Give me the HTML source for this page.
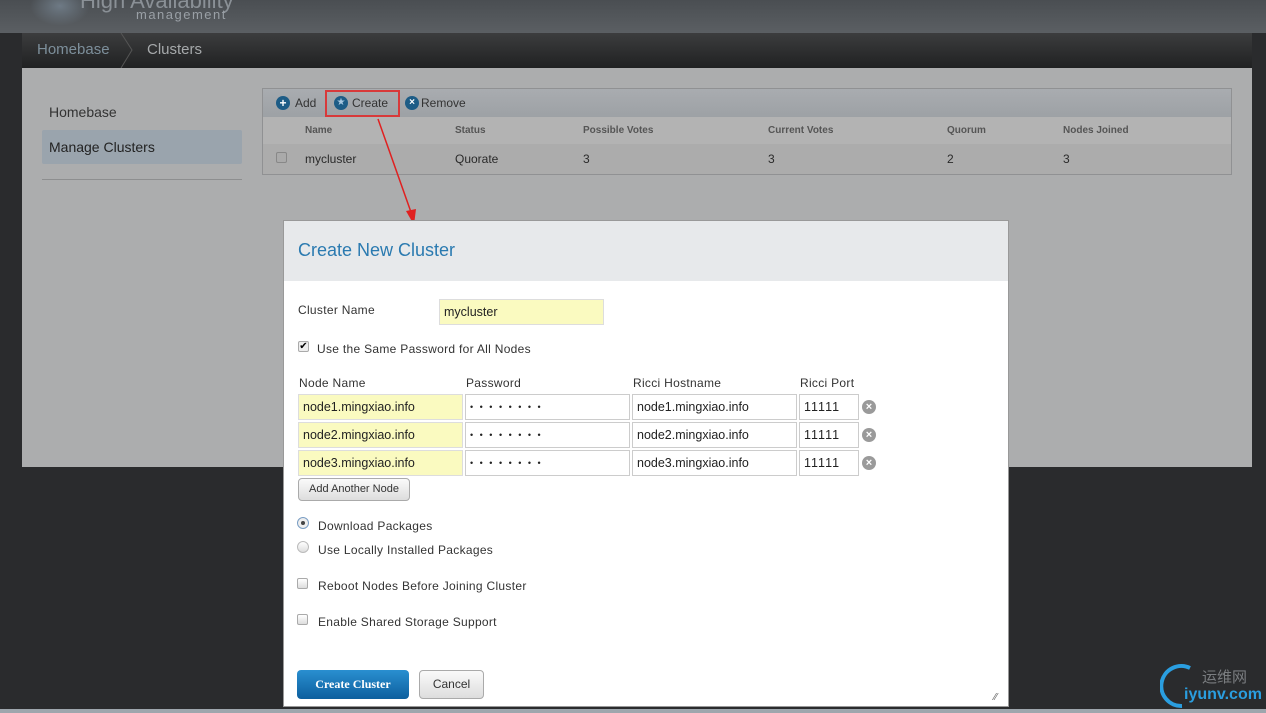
<!DOCTYPE html>
<html><head><meta charset="utf-8"><style>
*{margin:0;padding:0;box-sizing:border-box}
body{width:1266px;height:713px;overflow:hidden;background:#2a2b2d;font-family:"Liberation Sans","DejaVu Sans",sans-serif;position:relative}
.abs{position:absolute}
.top{left:0;top:0;width:1266px;height:33px;background:linear-gradient(#4a4e52,#5b5f63)}
.crumb{left:22px;top:33px;width:1230px;height:35px;background:linear-gradient(#3c3d3e,#202122)}
.panel{left:22px;top:68px;width:1230px;height:399px;background:#acadae}
.t{font-size:13px;color:#2a2a2a}
input.f{position:absolute;height:26px;border:1px solid #ccc;font:12.5px "Liberation Sans",sans-serif;padding-left:4px;color:#222;background:#fff}
.y{background:#fafac0 !important;border-color:#ddd !important}
.x{position:absolute;width:14px;height:14px;border-radius:50%;background:#9a9a9a;color:#fff;font-size:11px;line-height:14px;text-align:center;font-weight:bold}
.cb{position:absolute;width:11px;height:11px;border:1px solid #aaa;border-radius:2px;background:linear-gradient(#fff,#ddd)}
.lbl{position:absolute;font-size:12px;color:#333;letter-spacing:.3px}
.pw{font-size:9px !important;letter-spacing:2px}
</style></head><body>
<div class="abs top"></div>
<div class="abs" style="left:30px;top:-14px;width:60px;height:40px;border-radius:50%;background:radial-gradient(#6e7a85,transparent 70%)"></div>
<div class="abs" style="left:80px;top:-12px;font-size:22px;color:#8a9096">High Availability</div>
<div class="abs" style="left:136px;top:7px;font-size:13px;color:#9aa0a6;letter-spacing:1.5px">management</div>
<div class="abs crumb"></div>
<div class="abs" style="left:37px;top:41px;font-size:15px;color:#7d8f9b">Homebase</div>
<svg class="abs" style="left:120px;top:33px" width="14" height="35"><path d="M1 0 L12 17 L1 35" stroke="#555" fill="none"/></svg>
<div class="abs" style="left:147px;top:41px;font-size:15px;color:#a6a9ab">Clusters</div>
<div class="abs panel"></div>
<div class="abs" style="left:49px;top:104px;font-size:14px;color:#333">Homebase</div>
<div class="abs" style="left:42px;top:130px;width:200px;height:34px;background:#9aa4ad;border-radius:2px"></div>
<div class="abs" style="left:49px;top:139px;font-size:14px;color:#222">Manage Clusters</div>
<div class="abs" style="left:42px;top:179px;width:200px;height:1px;background:#8d8e8f"></div>
<div class="abs" style="left:262px;top:88px;width:970px;height:87px;border:1px solid #909193;background:#acacac"></div>
<div class="abs" style="left:263px;top:89px;width:968px;height:28px;background:linear-gradient(#a9acb0,#9da1a5)"></div>
<div class="abs" style="left:263px;top:117px;width:968px;height:27px;background:#b3b3b3"></div>
<div class="abs" style="left:276px;top:96px;width:14px;height:14px;border-radius:50%;background:#1d5c86;color:#fff;font-size:12px;line-height:14px;text-align:center;font-weight:bold">+</div>
<div class="abs" style="left:295px;top:96px;font-size:12px;color:#333">Add</div>
<div class="abs" style="left:325px;top:90px;width:75px;height:27px;border:2px solid #d8393a"></div>
<div class="abs" style="left:334px;top:96px;width:14px;height:14px;border-radius:50%;background:#1d5c86;color:#a8c8e0;font-size:10px;line-height:14px;text-align:center">★</div>
<div class="abs" style="left:352px;top:96px;font-size:12px;color:#333">Create</div>
<div class="abs" style="left:405px;top:96px;width:14px;height:14px;border-radius:50%;background:#1d5c86;color:#fff;font-size:10px;line-height:14px;text-align:center;font-weight:bold">×</div>
<div class="abs" style="left:421px;top:96px;font-size:12px;color:#333">Remove</div>
<div class="abs" style="top:125px;left:305px;font-size:10px;font-weight:bold;color:#555">Name</div>
<div class="abs" style="top:125px;left:455px;font-size:10px;font-weight:bold;color:#555">Status</div>
<div class="abs" style="top:125px;left:583px;font-size:10px;font-weight:bold;color:#555">Possible Votes</div>
<div class="abs" style="top:125px;left:768px;font-size:10px;font-weight:bold;color:#555">Current Votes</div>
<div class="abs" style="top:125px;left:947px;font-size:10px;font-weight:bold;color:#555">Quorum</div>
<div class="abs" style="top:125px;left:1063px;font-size:10px;font-weight:bold;color:#555">Nodes Joined</div>
<div class="cb" style="left:276px;top:152px;background:#aaa;border-color:#888"></div>
<div class="abs t" style="top:152px;left:305px;font-size:12px">mycluster</div>
<div class="abs t" style="top:152px;left:455px;font-size:12px">Quorate</div>
<div class="abs t" style="top:152px;left:583px;font-size:12px">3</div>
<div class="abs t" style="top:152px;left:768px;font-size:12px">3</div>
<div class="abs t" style="top:152px;left:947px;font-size:12px">2</div>
<div class="abs t" style="top:152px;left:1063px;font-size:12px">3</div>
<svg class="abs" style="left:370px;top:115px" width="60" height="115"><path d="M8 4 L42 100" stroke="#e02020" stroke-width="1.5"/><path d="M36 96 L44 110 L46 94 Z" fill="#e02020"/></svg>
<!-- modal -->
<div class="abs" style="left:283px;top:220px;width:726px;height:487px;background:#fff;border:1px solid #999"></div>
<div class="abs" style="left:284px;top:221px;width:724px;height:60px;background:#e7e9eb"></div>
<div class="abs" style="left:298px;top:240px;font-size:18px;color:#2a7ab0">Create New Cluster</div>
<div class="lbl" style="left:298px;top:303px">Cluster Name</div>
<input class="f y" style="left:439px;top:299px;width:165px;height:26px" value="mycluster">
<div class="cb" style="left:298px;top:341px;background:#eee;font-size:10px;line-height:9px;text-align:center">✔</div>
<div class="lbl" style="left:317px;top:342px">Use the Same Password for All Nodes</div>
<div class="lbl" style="left:299px;top:376px">Node Name</div>
<div class="lbl" style="left:466px;top:376px">Password</div>
<div class="lbl" style="left:633px;top:376px">Ricci Hostname</div>
<div class="lbl" style="left:800px;top:376px">Ricci Port</div>
<input class="f y" style="left:298px;top:394px;width:165px" value="node1.mingxiao.info">
<input class="f pw" style="left:465px;top:394px;width:165px" value="• • • • • • • •">
<input class="f" style="left:632px;top:394px;width:165px" value="node1.mingxiao.info">
<input class="f" style="left:799px;top:394px;width:60px;letter-spacing:1px" value="11111">
<div class="x" style="left:862px;top:400px">×</div>
<input class="f y" style="left:298px;top:422px;width:165px" value="node2.mingxiao.info">
<input class="f pw" style="left:465px;top:422px;width:165px" value="• • • • • • • •">
<input class="f" style="left:632px;top:422px;width:165px" value="node2.mingxiao.info">
<input class="f" style="left:799px;top:422px;width:60px;letter-spacing:1px" value="11111">
<div class="x" style="left:862px;top:428px">×</div>
<input class="f y" style="left:298px;top:450px;width:165px" value="node3.mingxiao.info">
<input class="f pw" style="left:465px;top:450px;width:165px" value="• • • • • • • •">
<input class="f" style="left:632px;top:450px;width:165px" value="node3.mingxiao.info">
<input class="f" style="left:799px;top:450px;width:60px;letter-spacing:1px" value="11111">
<div class="x" style="left:862px;top:456px">×</div>
<div class="abs" style="left:298px;top:478px;width:112px;height:23px;border:1px solid #aaa;border-radius:4px;background:linear-gradient(#fafafa,#ddd);font-size:11px;color:#333;text-align:center;line-height:21px">Add Another Node</div>
<div class="abs" style="left:297px;top:517px;width:12px;height:12px;border-radius:50%;border:1px solid #7a9ec4;background:#eee"><div style="width:4px;height:4px;border-radius:50%;background:#444;margin:3px"></div></div>
<div class="lbl" style="left:318px;top:519px">Download Packages</div>
<div class="abs" style="left:297px;top:541px;width:12px;height:12px;border-radius:50%;border:1px solid #bbb;background:linear-gradient(#fff,#ddd)"></div>
<div class="lbl" style="left:318px;top:543px">Use Locally Installed Packages</div>
<div class="cb" style="left:297px;top:578px"></div>
<div class="lbl" style="left:318px;top:579px">Reboot Nodes Before Joining Cluster</div>
<div class="cb" style="left:297px;top:614px"></div>
<div class="lbl" style="left:318px;top:615px">Enable Shared Storage Support</div>
<div class="abs" style="left:297px;top:670px;width:112px;height:29px;border-radius:4px;background:linear-gradient(#2a8fd0,#0d5f9e);color:#fff;font:bold 12px 'Liberation Serif',serif;text-align:center;line-height:29px">Create Cluster</div>
<div class="abs" style="left:419px;top:670px;width:65px;height:29px;border-radius:4px;border:1px solid #aaa;background:linear-gradient(#fafafa,#ddd);color:#333;font-size:12px;text-align:center;line-height:27px">Cancel</div>
<div class="abs" style="left:994px;top:692px;font-size:10px;color:#666">⁄⁄</div>
<div class="abs" style="left:0;top:709px;width:1266px;height:4px;background:#9ea6ad"></div>
<svg class="abs" style="left:1160px;top:664px" width="40" height="45"><path d="M30 4 A20 20 0 1 0 22 42" stroke="#2a9ee0" stroke-width="4" fill="none"/></svg>
<div class="abs" style="left:1202px;top:666px;font-size:15px;color:#7a7d80;font-family:'Noto Sans CJK SC',sans-serif">运维网</div>
<div class="abs" style="left:1184px;top:686px;font-size:16px;font-weight:bold;color:#2a9ee0">iyunv.com</div>
</body></html>
